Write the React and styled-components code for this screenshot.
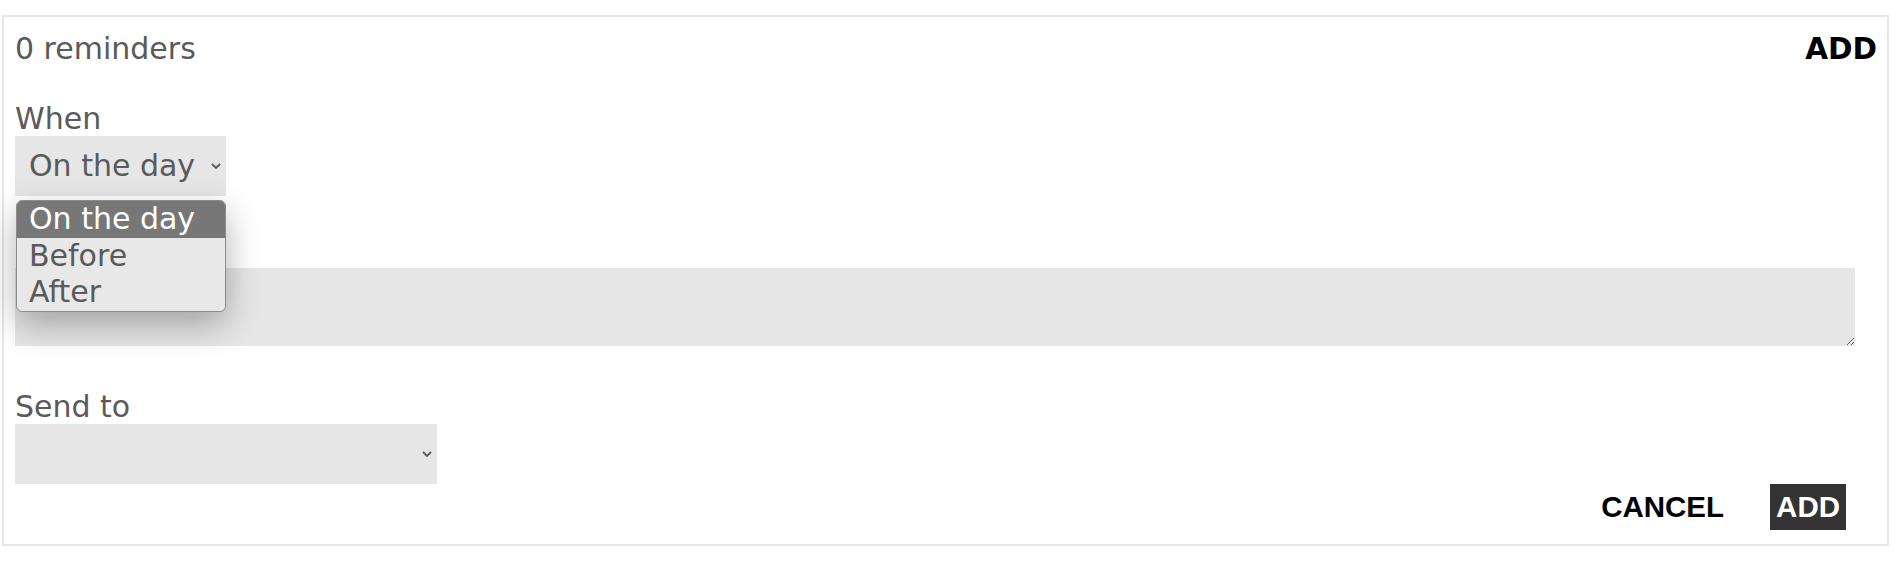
import React from "react";
import styled, { createGlobalStyle } from "styled-components";

const Global = createGlobalStyle`
  html, body { margin: 0; padding: 0; background: #fff; }
  body { font-family: "DejaVu Sans", Verdana, sans-serif; }
  * { box-sizing: border-box; }
`;

const Page = styled.div`
  padding: 15px 7px 16px 2px;
`;

const Card = styled.section`
  border: 2px solid #e6e6e6;
  padding: 14px 10px 14px 11px;
  color: #5a5a5a;
  font-size: 30px;
`;

const Header = styled.div`
  display: flex;
  justify-content: space-between;
  align-items: flex-start;
  height: 35px;
  margin-bottom: 36px;
`;

const Count = styled.div`
  line-height: 35px;
`;

const LinkButton = styled.button`
  background: none;
  border: none;
  padding: 2px 0 0;
  font-family: "DejaVu Sans", Verdana, sans-serif;
  font-weight: bold;
  font-size: 29.5px;
  line-height: 33px;
  color: #000;
  cursor: pointer;
`;

const Field = styled.div`
  position: relative;
  margin-bottom: ${(p) => p.$gap || 0}px;
`;

const Label = styled.label`
  display: block;
  line-height: 34px;
  height: 34px;
`;

const SelectBox = styled.div`
  width: ${(p) => p.$width}px;
  height: 60px;
  background: #e6e6e6;
  display: flex;
  align-items: center;
  justify-content: space-between;
  padding: 0 5px 0 14px;
  color: #5a5a5a;
  line-height: 34px;
`;

const Chevron = () => (
  <svg width="10" height="6" viewBox="0 0 10 6">
    <path d="M1 1 L5 5 L9 1" fill="none" stroke="#5a5a5a" strokeWidth="1.8" />
  </svg>
);

const Menu = styled.ul`
  position: absolute;
  left: 1px;
  top: 98px;
  width: 210px;
  margin: 0;
  padding: 0;
  list-style: none;
  background: #e8e8e8;
  border: 1px solid #8c8c8c;
  border-radius: 6px;
  overflow: hidden;
  box-shadow: 0 12px 34px rgba(0, 0, 0, 0.3);
  z-index: 2;
`;

const Option = styled.li`
  height: 36.67px;
  line-height: 36.67px;
  padding-left: 12px;
  background: ${(p) => (p.$active ? "#777777" : "transparent")};
  color: ${(p) => (p.$active ? "#ffffff" : "#5a5a5a")};
  white-space: nowrap;
`;

const TextArea = styled.textarea`
  display: block;
  width: calc(100% - 22px);
  height: 78px;
  border: none;
  background: #e6e6e6;
  padding: 0;
  margin: 0;
  font-family: "DejaVu Sans", Verdana, sans-serif;
  font-size: 30px;
  color: #5a5a5a;
  outline: none;
`;

const Actions = styled.div`
  display: flex;
  justify-content: flex-end;
  gap: 40px;
  margin-right: 31px;
`;

const ActionButton = styled.button`
  height: 46px;
  padding: 0 6px;
  border: none;
  font-family: "Liberation Sans", Arial, sans-serif;
  font-weight: bold;
  font-size: 29.5px;
  line-height: 46px;
  background: ${(p) => (p.$primary ? "#333333" : "transparent")};
  color: ${(p) => (p.$primary ? "#ffffff" : "#000000")};
  cursor: pointer;
`;

export default function App() {
  return (
    <>
      <Global />
      <Page>
        <Card>
          <Header>
            <Count>0 reminders</Count>
            <LinkButton>ADD</LinkButton>
          </Header>

          <Field $gap={38}>
            <Label>When</Label>
            <SelectBox $width={211}>
              <span>On the day</span>
              <Chevron />
            </SelectBox>
            <Menu>
              <Option $active>On the day</Option>
              <Option>Before</Option>
              <Option>After</Option>
            </Menu>
          </Field>

          <Field $gap={44}>
            <Label>Message</Label>
            <TextArea />
          </Field>

          <Field>
            <Label>Send to</Label>
            <SelectBox $width={422}>
              <span />
              <Chevron />
            </SelectBox>
          </Field>

          <Actions>
            <ActionButton>CANCEL</ActionButton>
            <ActionButton $primary>ADD</ActionButton>
          </Actions>
        </Card>
      </Page>
    </>
  );
}
